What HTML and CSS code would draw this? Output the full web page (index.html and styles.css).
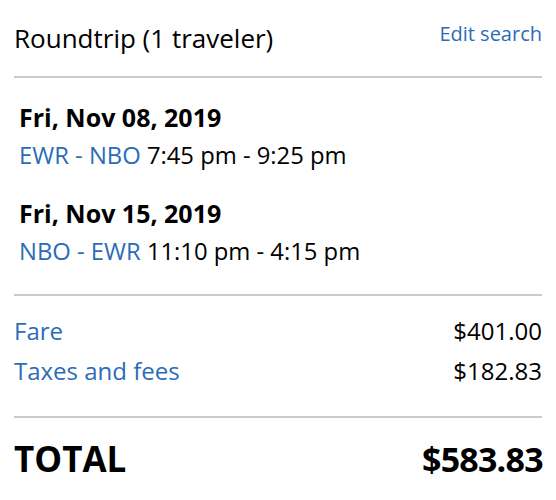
FILE: index.html
```html
<!DOCTYPE html>
<html lang="en">
<head>
<meta charset="utf-8">
<title>Trip summary</title>
<link rel="stylesheet" href="styles.css">
</head>
<body>
<div class="summary">
  <div class="header">
    <div class="title">Roundtrip (1 traveler)</div>
    <a class="edit" href="#">Edit search</a>
  </div>
  <div class="trips">
    <div class="leg">
      <div class="date">Fri, Nov 08, 2019</div>
      <div class="route"><span class="link">EWR - NBO</span> 7:45 pm - 9:25 pm</div>
    </div>
    <div class="leg">
      <div class="date">Fri, Nov 15, 2019</div>
      <div class="route"><span class="link">NBO - EWR</span> 11:10 pm - 4:15 pm</div>
    </div>
  </div>
  <div class="fares">
    <div class="row"><span class="link">Fare</span><span>$401.00</span></div>
    <div class="row"><span class="link">Taxes and fees</span><span>$182.83</span></div>
  </div>
  <div class="total">
    <span class="total-label">TOTAL</span><span class="total-amount">$583.83</span>
  </div>
</div>
</body>
</html>
```
FILE: styles.css
```css
html, body {
  margin: 0;
  padding: 0;
  background: #fff;
}
body {
  font-family: "Open Sans", "DejaVu Sans", sans-serif;
  color: #000;
}
.summary {
  width: 528px;
  margin: 0 0 0 14px;
}
.header {
  display: flex;
  justify-content: space-between;
  align-items: flex-start;
  padding: 21.5px 0 22.5px;
  border-bottom: 2px solid #cccccc;
}
.title {
  font-size: 26px;
  line-height: 32px;
}
.edit {
  font-size: 20px;
  line-height: 24px;
  color: #2b6cb8;
  text-decoration: none;
}
.link {
  color: #2b6cb8;
}
.trips {
  padding: 20px 0 24px 5px;
  border-bottom: 2px solid #cccccc;
  display: flex;
  flex-direction: column;
  gap: 20px;
}
.date {
  font-size: 25px;
  font-weight: 700;
  line-height: 38px;
}
.route {
  font-size: 23.8px;
  line-height: 38px;
}
.fares {
  padding: 14.7px 0 25.3px;
  border-bottom: 2px solid #cccccc;
}
.row {
  display: flex;
  justify-content: space-between;
  font-size: 24px;
  line-height: 40px;
}
.total {
  display: flex;
  justify-content: space-between;
  padding-top: 18px;
  font-weight: 700;
  line-height: 46px;
}
.total-label {
  font-size: 35px;
}
.total-amount {
  font-size: 34px;
  letter-spacing: -0.8px;
  margin-right: -0.8px;
}
```
